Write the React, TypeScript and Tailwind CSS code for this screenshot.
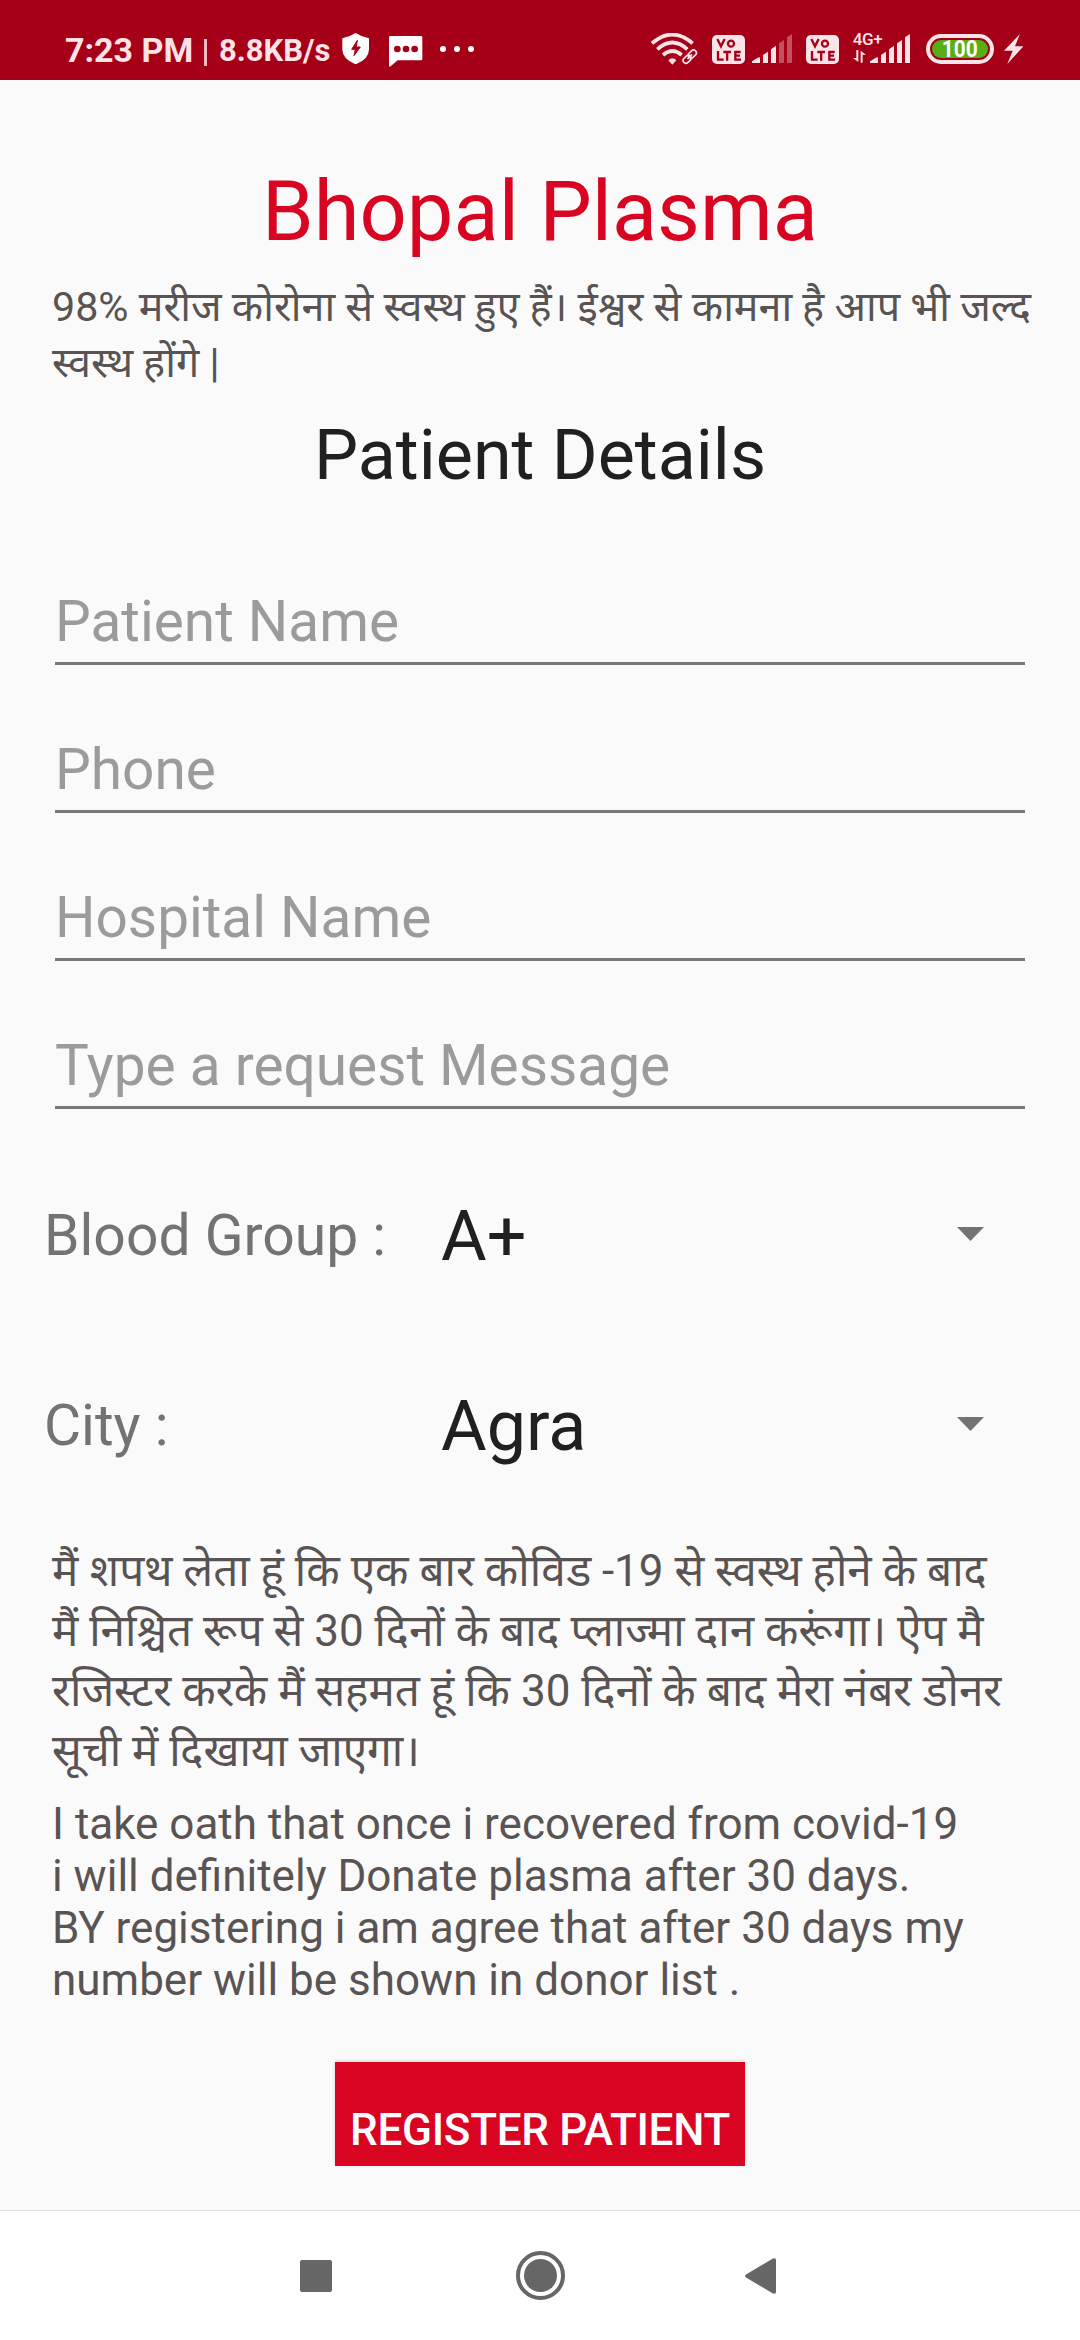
import { useState } from "react";

const fields = [
  { id: "name", placeholder: "Patient Name" },
  { id: "phone", placeholder: "Phone" },
  { id: "hospital", placeholder: "Hospital Name" },
  { id: "message", placeholder: "Type a request Message" },
];

const selects = [
  { id: "blood", label: "Blood Group :", value: "A+" },
  { id: "city", label: "City :", value: "Agra" },
];

const hindiOath = [
  "मैं शपथ लेता हूं कि एक बार कोविड -19 से स्वस्थ होने के बाद",
  "मैं निश्चित रूप से 30 दिनों के बाद प्लाज्मा दान करूंगा। ऐप मै",
  "रजिस्टर करके मैं सहमत हूं कि 30 दिनों के बाद मेरा नंबर डोनर",
  "सूची में दिखाया जाएगा।",
];

const englishOath = [
  "I take oath that once i recovered from covid-19",
  "i will definitely Donate plasma after 30 days.",
  "BY registering i am agree that after 30 days my",
  "number will be shown in donor list .",
];

const VoLte = () => (
  <div className="h-[29px] w-[33px] rounded-[5px] bg-[#fbe4e8]">
    <svg viewBox="0 0 99 87" className="h-[29px] w-[33px]">
      <g fill="none" stroke="#a50018" strokeWidth="7">
        <path d="M16 12L27 34L38 12" />
        <circle cx="57" cy="26" r="9" />
        <path d="M18 48V74H35M34 51H57M45.500 51V77M86 51H70V74H87M70 62H84" />
      </g>
    </svg>
  </div>
);

const Signal = ({ level }: { level: number }) => (
  <svg viewBox="0 0 120 88" className="h-[29.33px] w-10" fill="#fbe4e8">
    <path d="M0 82L20 70Q24 68 24 73V88H3Q-2 88 0 82Z" />
    <path d="M33 63L48 53V88H33Z" />
    <path d="M57 46L72 35V88H57Z" />
    <path d="M81 28L96 18V88H81Z" opacity={level > 3 ? 1 : 0.35} />
    <path d="M105 10L120 0V88H105Z" opacity={level > 4 ? 1 : 0.35} />
  </svg>
);

const StatusBar = () => (
  <header className="flex h-20 shrink-0 items-start bg-[#a50018] pl-[65px] font-bold text-[#ffe3e6]">
    <span className="mt-[30px] w-[139px] text-[34px] leading-10 whitespace-nowrap">
      7:23 PM
    </span>
    <span className="mt-[39px] h-[27px] w-[3px] bg-[#f3bcc4]" />
    <span className="mt-[31px] ml-[12px] w-[114px] text-[31px] leading-10 whitespace-nowrap">
      8.8KB/s
    </span>
    <svg viewBox="0 0 82 94" className="mt-[33px] ml-[9px] h-[31.33px] w-[27.33px]">
      <path d="M41 0Q60 12 81 16V50Q80 78 41 94Q2 78 1 50V16Q22 12 41 0Z" fill="#fff" />
      <path d="M46 22L29 49H40L36 68L55 42H43Z" fill="#a50018" stroke="#a50018" strokeWidth="3" strokeLinejoin="round" />
    </svg>
    <svg viewBox="0 0 100 92" className="mt-[36px] ml-[20px] h-[30.67px] w-[33.33px]">
      <path d="M4 0H96Q100 0 100 4V69Q100 73 96 73H26L5 91Q0 94 0 88V4Q0 0 4 0Z" fill="#fff" />
      <g fill="#a50018">
        <circle cx="25" cy="39" r="10" />
        <circle cx="51" cy="39" r="10" />
        <circle cx="77" cy="39" r="10" />
      </g>
    </svg>
    <div className="mt-[46px] ml-[17px] flex w-[34px] justify-between">
      <i className="size-[6px] rounded-full bg-white" />
      <i className="size-[6px] rounded-full bg-white" />
      <i className="size-[6px] rounded-full bg-white" />
    </div>

    {/* wifi with link badge */}
    <svg viewBox="0 0 142 96" className="mt-[33px] ml-auto h-8 w-[47.33px]" fill="none" stroke="#fbe4e8">
      <path d="M3 31Q64 -22 125 31" strokeWidth="11" />
      <path d="M19 49Q64 8 109 49" strokeWidth="11" />
      <path d="M36 66Q64 42 92 66" strokeWidth="11" />
      <path d="M52 82Q64 70 76 82L64 95Z" fill="#fbe4e8" stroke="none" />
      <g strokeWidth="5" transform="rotate(-45 117 71)">
        <rect x="92" y="62" width="27" height="17" rx="8.5" />
        <rect x="114" y="62" width="27" height="17" rx="8.5" />
        <path d="M107 70.500H126" />
      </g>
    </svg>
    <div className="mt-[35px] ml-[13.500px]">
      <VoLte />
    </div>
    <div className="mt-[34px] ml-[7px]">
      <Signal level={3} />
    </div>
    <div className="mt-[35px] ml-[14px]">
      <VoLte />
    </div>
    <div className="mt-[32px] ml-[14px] flex w-[57px]">
      <div className="w-[17px] font-medium">
        <span className="block text-[17px] leading-[15px] tracking-[-0.3px]">4G+</span>
        <svg viewBox="0 0 40 38" className="mt-[3px] h-[12.67px] w-[13.33px]" fill="#fbe4e8">
          <path d="M10 0H16V36L0 24H10ZM23 38V2L39 14H29V38Z" />
        </svg>
      </div>
      <div className="mt-[2px]">
        <Signal level={5} />
      </div>
    </div>
    <div className="mt-[34px] ml-[16px] flex h-[30px] w-[68px] items-center justify-center rounded-full border-4 border-[#fbe4e8]">
      <div className="flex h-[18px] w-[56px] items-center justify-center rounded-full bg-[#58ae17] text-[24px] leading-none text-white">
        <span className="inline-block scale-x-[0.87]">100</span>
      </div>
    </div>
    <svg viewBox="0 0 58 90" className="mt-[34px] mr-[57px] ml-[10px] h-[30px] w-[19.33px]" fill="#fbe4e8">
      <path d="M48 0L0 50H26L10 90L58 37H33Z" />
    </svg>
  </header>
);

const NavBar = () => (
  <nav className="flex h-[130px] shrink-0 items-center justify-center border-t border-[#e0e0e0] bg-white pr-1">
    <div className="size-8 rounded-[2px] bg-[#666]" />
    <div className="ml-[184px] flex size-[49px] items-center justify-center rounded-full border-4 border-[#666]">
      <div className="size-[33px] rounded-full bg-[#666]" />
    </div>
    <svg viewBox="0 0 31 36" className="ml-[180px] h-9 w-[31px]" fill="#666">
      <path d="M1 16.500L28 0.500Q31 -0.500 31 2V34Q31 36.500 28 35.500L1 19.500Q-1 18 1 16.500Z" />
    </svg>
  </nav>
);

const App = () => {
  const [values, setValues] = useState<Record<string, string>>({});

  return (
    <div className="flex h-[2340px] w-[1080px] flex-col overflow-hidden bg-[#fafafa] font-[Roboto,'Noto_Sans_Devanagari_UI','Noto_Sans_Devanagari','Noto_Sans',sans-serif]">
      <StatusBar />
      <main className="flex grow flex-col">
        <h1 className="mt-[82px] text-center text-[83px] leading-[100px] text-[#d90422]">
          Bhopal Plasma
        </h1>
        <p className="mt-[17px] pl-[52px] text-[41.25px] leading-[56px] whitespace-nowrap text-[#595453]">
          98% मरीज कोरोना से स्वस्थ हुए हैं। ईश्वर से कामना है आप भी जल्द
          <br />
          स्वस्थ होंगे |
        </p>
        <h2 className="mt-[22px] text-center text-[70px] leading-[84px] text-[#202020]">
          Patient Details
        </h2>

        <div className="mt-[85px] flex flex-col gap-[65px] px-[55px]">
          {fields.map((field) => (
            <input
              key={field.id}
              value={values[field.id] ?? ""}
              onChange={(e) =>
                setValues({ ...values, [field.id]: e.target.value })
              }
              placeholder={field.placeholder}
              className="h-[83px] w-full border-b-3 border-[#7a7776] text-[56.75px] text-[#202020] outline-none placeholder:text-[#9b9b9b]"
            />
          ))}
        </div>

        <div className="mt-[77px] flex flex-col gap-[90px] pr-[96px] pl-[44px]">
          {selects.map((select) => (
            <div key={select.id} className="flex h-[100px] items-center">
              <span className="w-[397px] text-[57px] text-[#737373]">
                {select.label}
              </span>
              <span className="grow text-[70px] text-[#202020]">
                {select.value}
              </span>
              <svg viewBox="0 0 27 14" className="mb-[4px] h-[14px] w-[27px]" fill="#737373">
                <path d="M0 0H27L13.500 14Z" />
              </svg>
            </div>
          ))}
        </div>

        <div className="mt-[65px] pl-[52px] text-[44px] leading-[60px] whitespace-nowrap text-[#595453]">
          {hindiOath.map((line) => (
            <p key={line}>{line}</p>
          ))}
        </div>
        <div className="mt-[17px] pl-[52px] text-[44px] leading-[52px] whitespace-nowrap text-[#595453]">
          {englishOath.map((line) => (
            <p key={line}>{line}</p>
          ))}
        </div>

        <button className="mt-[56px] h-[104px] w-[410px] self-center bg-[#d90422] pt-[32px] text-[44px] leading-[52px] font-medium tracking-[-0.3px] whitespace-nowrap text-white shadow-[0_-1px_4px_rgba(0,0,0,0.15)]">
          REGISTER PATIENT
        </button>
      </main>
      <NavBar />
    </div>
  );
};

export default App;
